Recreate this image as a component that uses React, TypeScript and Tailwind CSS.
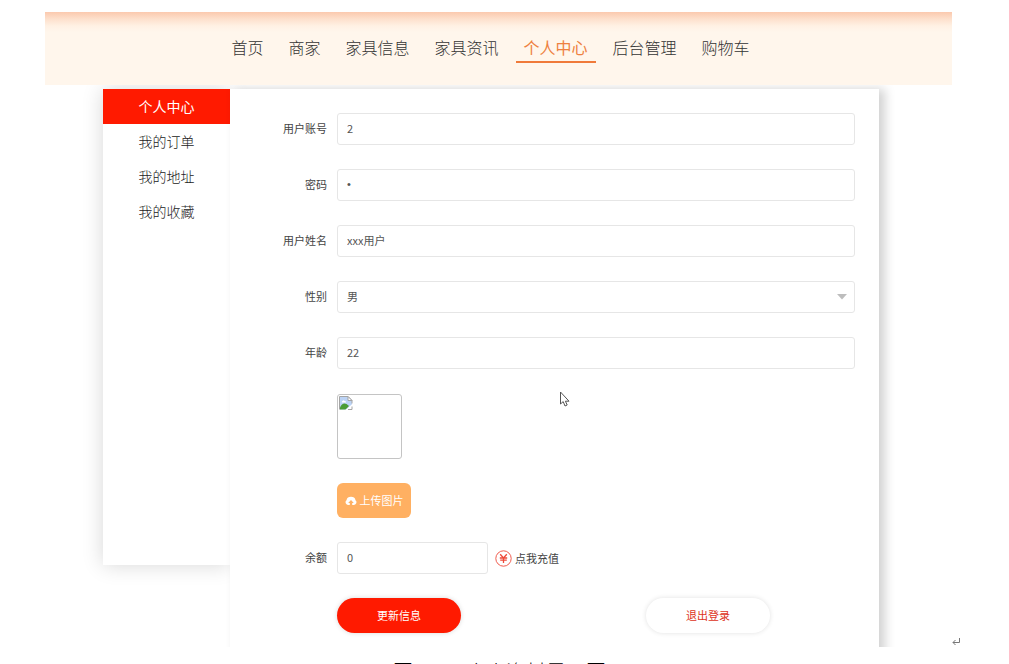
import { useState } from "react";
import type { ReactNode } from "react";

const navItems = ["首页", "商家", "家具信息", "家具资讯", "个人中心", "后台管理", "购物车"];
const sideItems = ["个人中心", "我的订单", "我的地址", "我的收藏"];

const inputClass =
  "block h-8 w-full rounded-[3px] border border-[#e6e6e6] bg-white px-[9px] pb-[2px] text-[11px] text-[#555] outline-none";

function Field({ id, label, children }: { id?: string; label?: string; children: ReactNode }) {
  return (
    <div className="flex">
      <div className="w-[98px] shrink-0 pr-[10px] text-right text-[11px] leading-[30px]">
        {label && <label htmlFor={id}>{label}</label>}
      </div>
      <div className="flex min-w-0 flex-1 items-center">{children}</div>
    </div>
  );
}

function BrokenImage() {
  return (
    <svg width="16" height="16" viewBox="0 0 16 16" aria-hidden="true">
      <path d="M2 1.500h8l4 4v9H2z" fill="#bcd3f5" />
      <path d="M1.500 14.500v-13h8.500l4 4v3" fill="none" stroke="#a4a4a4" />
      <path d="M10 1.500v4h4z" fill="#fff" stroke="#a4a4a4" strokeLinejoin="round" />
      <path d="M4 6.500a1.500 1.500 0 0 1 2.600-.6A1.300 1.300 0 0 1 8 7.500H3.800z" fill="#fff" />
      <path d="M2 12.500C3.500 9 6 7.500 8.500 9l2.500 2-3.500 3.500H2z" fill="#4a9c35" />
      <path d="M7 15.500 14.800 8.500v7z" fill="#fff" />
      <path d="M10 14.500h4V11.500" fill="none" stroke="#a4a4a4" />
    </svg>
  );
}

function CloudUpload() {
  return (
    <svg width="12" height="12" viewBox="0 0 12 12" aria-hidden="true">
      <path
        d="M3 10A2.700 2.700 0 0 1 1.500 5.200a4.600 4.200 0 0 1 9 0A2.700 2.700 0 0 1 9 10H7.200V8h1.600L6 5 3.200 8h1.600v2z"
        fill="#fff"
      />
    </svg>
  );
}

function YuanBadge() {
  return (
    <svg width="17" height="17" viewBox="0 0 17 17" fill="none" stroke="#ee4a3a" aria-hidden="true">
      <circle cx="8.500" cy="8.500" r="7.700" strokeWidth="0.900" />
      <path d="M5.200 4.200 8.500 8l3.300-3.800M8.500 8v5M4.800 8h7.400M5.200 10.200h6.600" strokeWidth="1.300" />
    </svg>
  );
}

export default function App() {
  const [form, setForm] = useState({ account: "2", password: "1", name: "xxx用户", gender: "男", age: "22", balance: "0" });
  const bind = (key: keyof typeof form) => ({
    id: key,
    value: form[key],
    onChange: (e: { target: { value: string } }) => setForm({ ...form, [key]: e.target.value }),
  });

  return (
    <div className="h-screen overflow-hidden bg-white pt-3 font-['Noto_Sans_CJK_SC',sans-serif] text-[#444]">
      <div className="flex">
        <div className="ml-[45px] min-w-0 flex-1 overflow-hidden">
          <header className="h-[73px] bg-[#fff6ec] bg-[linear-gradient(to_bottom,#fbc9ae_0px,#fde0cc_7px,#fff1e4_14px,#fff6ec_20px)] pt-[23px]">
            <nav className="flex justify-center gap-[9px] pr-4">
              {navItems.map((item) => (
                <a
                  key={item}
                  href="#"
                  className={
                    item === "个人中心"
                      ? "border-b-2 border-[#f07a3a] px-2 pb-[2px] text-base leading-6 text-[#ee8040]"
                      : "px-2 text-base leading-6 font-light text-[#333]"
                  }
                >
                  {item}
                </a>
              ))}
            </nav>
          </header>

          <div className="flex h-[562px] items-start overflow-hidden pt-1 pr-[73px] pl-[58px]">
            <aside className="h-[476px] w-[127px] shrink-0 bg-white shadow-[0_0_20px_rgba(0,0,0,0.16)]">
              <ul>
                {sideItems.map((item, i) => (
                  <li key={item}>
                    <a
                      href="#"
                      className={
                        i === 0
                          ? "block h-[35px] bg-[#ff1a00] text-center text-sm leading-[34px] text-white"
                          : "block h-[35px] text-center text-sm leading-[34px] font-light text-[#222]"
                      }
                    >
                      {item}
                    </a>
                  </li>
                ))}
              </ul>
            </aside>

            <main className="relative h-[640px] min-w-0 flex-1 bg-white pt-6 pr-6 pl-[9px] shadow-[6px_0_10px_rgba(0,0,0,0.18)]">
              <form className="flex flex-col gap-6" onSubmit={(e) => e.preventDefault()}>
                <Field id="account" label="用户账号">
                  <input className={inputClass} {...bind("account")} />
                </Field>
                <Field id="password" label="密码">
                  <input type="password" className={`${inputClass} font-['Liberation_Sans',sans-serif]`} {...bind("password")} />
                </Field>
                <Field id="name" label="用户姓名">
                  <input className={inputClass} {...bind("name")} />
                </Field>
                <Field id="gender" label="性别">
                  <div className="relative w-full">
                    <select className={`${inputClass} appearance-none`} {...bind("gender")}>
                      <option>男</option>
                      <option>女</option>
                    </select>
                    <svg className="pointer-events-none absolute top-[13px] right-2" width="10" height="6" viewBox="0 0 10 6" aria-hidden="true">
                      <path d="M0 0h10L5 5.500z" fill="#bdbdbd" />
                    </svg>
                  </div>
                </Field>
                <Field id="age" label="年龄">
                  <input className={inputClass} {...bind("age")} />
                </Field>
                <Field>
                  <div className="mt-px size-[65px] rounded-[3px] border border-[#c4c4c4]">
                    <BrokenImage />
                  </div>
                </Field>
                <Field>
                  <button type="button" className="flex h-[35px] w-[74px] items-center justify-center gap-[3px] rounded-md bg-[#ffb062] text-[11px] text-white">
                    <CloudUpload />
                    上传图片
                  </button>
                </Field>
                <Field id="balance" label="余额">
                  <div className="w-[151px]">
                    <input className={inputClass} {...bind("balance")} />
                  </div>
                  <a href="#" className="ml-[7px] flex items-center gap-[3px] text-[11px]">
                    <YuanBadge />
                    点我充值
                  </a>
                </Field>
                <Field>
                  <button type="submit" className="h-[35px] w-[124px] rounded-full bg-[#ff1a00] text-[11px] text-white shadow-[0_0_5px_rgba(0,0,0,0.15)]">
                    更新信息
                  </button>
                  <button type="button" className="mr-[85px] ml-auto h-[35px] w-[124px] rounded-full bg-white text-[11px] text-[#dd3322] shadow-[0_0_5px_rgba(0,0,0,0.12)]">
                    退出登录
                  </button>
                </Field>
              </form>
              <svg className="pointer-events-none absolute top-[302px] left-[329px]" width="12" height="17" viewBox="0 0 12 17" aria-hidden="true">
                <path d="M1.500 1v12l2.700-2.400L6 15l2.200-1-1.800-3.800H10z" fill="#fff" stroke="#555" strokeLinejoin="round" />
              </svg>
            </main>
          </div>
        </div>
        <div className="flex w-[57px] shrink-0 items-end">
          <svg width="9" height="9" viewBox="0 0 9 9" fill="none" stroke="#777" aria-hidden="true">
            <path d="M7.500 0v4.500H1M3.500 2 1 4.500 3.500 7" />
          </svg>
        </div>
      </div>
      <p className="mt-3 flex justify-center gap-7 pr-[10px] font-['Liberation_Serif','Noto_Sans_CJK_SC',serif] text-xl leading-7 font-light text-black">
        <span>图5.3</span>
        <span>个人资料界面图</span>
      </p>
    </div>
  );
}
